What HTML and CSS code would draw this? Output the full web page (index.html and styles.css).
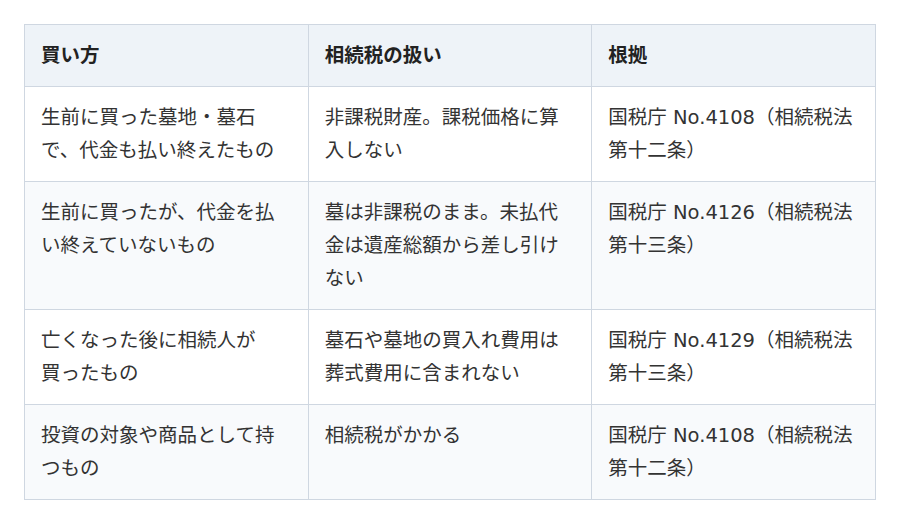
FILE: index.html
```html
<!DOCTYPE html>
<html lang="ja">
<head>
<meta charset="utf-8">
<link rel="stylesheet" href="styles.css">
</head>
<body>
<table class="tax-table">
  <thead>
    <tr>
      <th>買い方</th>
      <th>相続税の扱い</th>
      <th>根拠</th>
    </tr>
  </thead>
  <tbody>
    <tr>
      <td>生前に買った墓地・墓石で、代金も払い終えたもの</td>
      <td>非課税財産。課税価格に算入しない</td>
      <td>国税庁 No.4108（相続税法第十二条）</td>
    </tr>
    <tr>
      <td>生前に買ったが、代金を払い終えていないもの</td>
      <td>墓は非課税のまま。未払代金は遺産総額から差し引けない</td>
      <td>国税庁 No.4126（相続税法第十三条）</td>
    </tr>
    <tr>
      <td>亡くなった後に相続人が<span class="nowrap">買ったもの</span></td>
      <td>墓石や墓地の買入れ費用は葬式費用に含まれない</td>
      <td>国税庁 No.4129（相続税法第十三条）</td>
    </tr>
    <tr>
      <td>投資の対象や商品として持つもの</td>
      <td>相続税がかかる</td>
      <td>国税庁 No.4108（相続税法第十二条）</td>
    </tr>
  </tbody>
</table>
</body>
</html>
```
FILE: styles.css
```css
html, body {
  margin: 0;
  padding: 0;
  background: #ffffff;
}
body {
  padding: 24px;
  font-family: "DejaVu Sans", "Noto Sans CJK JP", sans-serif;
  color: #333333;
}
.tax-table {
  border-collapse: collapse;
  width: 852px;
  table-layout: fixed;
  font-size: 19.5px;
  line-height: 33px;
}
.tax-table th,
.tax-table td {
  border: 1px solid #cfd7e1;
  padding: 14px 16px;
  text-align: left;
  vertical-align: top;
  width: 33.33%;
}
.tax-table th {
  background: #eef3f8;
  font-weight: 700;
  color: #222222;
}
.tax-table tbody tr:nth-child(even) td {
  background: #f8fafc;
}
.nowrap {
  white-space: nowrap;
}
```
